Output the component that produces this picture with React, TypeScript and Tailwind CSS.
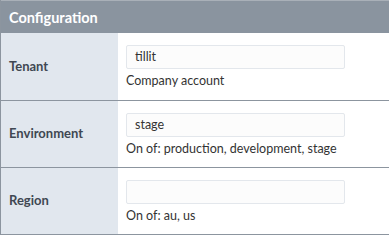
const rows = [
  { label: 'Tenant', value: 'tillit', help: 'Company account' },
  { label: 'Environment', value: 'stage', help: 'On of: production, development, stage' },
  { label: 'Region', value: '', help: 'On of: au, us' },
];

export default function App() {
  return (
    <div className="w-[389px] h-[247px] bg-white" style={{ fontFamily: 'Lato, "Open Sans", sans-serif' }}>
      <div className="border-l border-[#8c959f] border-b border-b-[#8c959f]">
        <div className="h-[33px] bg-[#8a949f] border-t border-[#a9b0b8] flex items-center pl-2 pt-[1px] text-[14.5px] font-bold text-white">
          Configuration
        </div>
        {rows.map((r, i) => (
          <div
            key={r.label}
            className={`flex h-[67px] ${i > 0 ? 'border-t border-[#8c959f]' : ''}`}
          >
            <div className="w-[117px] shrink-0 bg-[#e1e7ee] flex items-center pl-2 text-[13px] font-bold text-[#3f4852]">
              {r.label}
            </div>
            <div className="flex-1 pl-2 pt-[12px]">
              <div className="w-[219px] h-[24px] border border-[#e3e7ec] rounded-[2px] bg-[#fcfcfc] flex items-center px-2 text-[12.5px] text-[#333]">
                {r.value}
              </div>
              <div className="mt-[4px] text-[12.5px] leading-[15px] text-[#333]">{r.help}</div>
            </div>
          </div>
        ))}
      </div>
    </div>
  );
}
